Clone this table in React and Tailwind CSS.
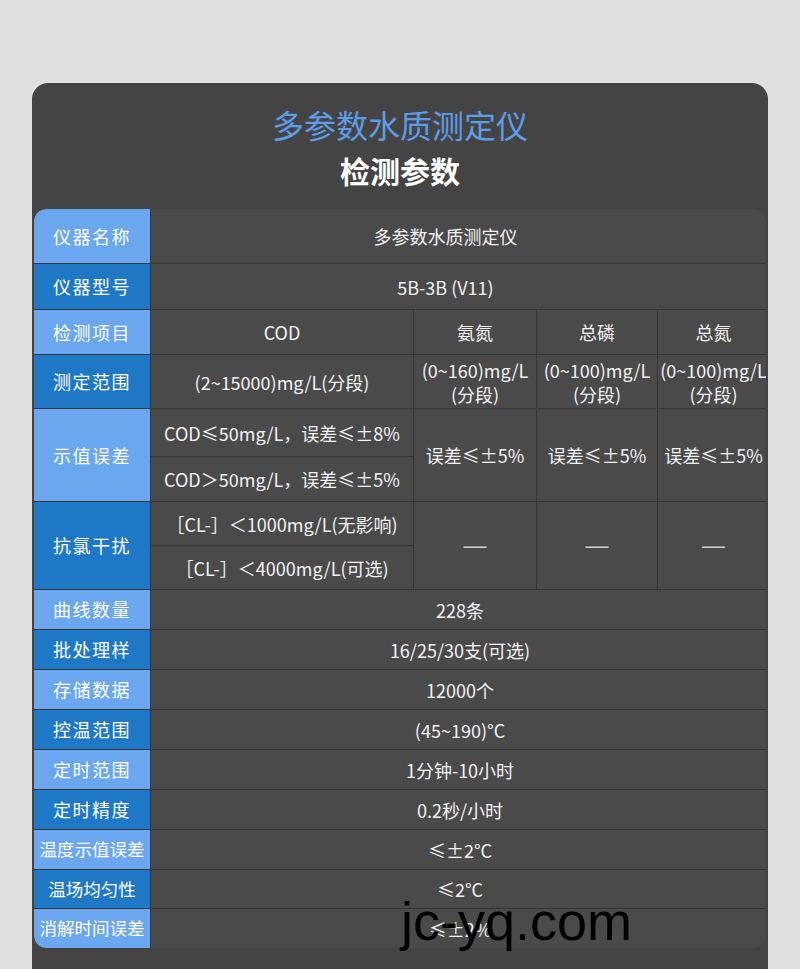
import React from 'react';

const light = 'bg-[#6aa7ef]';
const dark = 'bg-[#1f78c6]';

const simpleRows = [
  { label: '曲线数量', value: '228条', h: 'h-[39px]', tone: light },
  { label: '批处理样', value: '16/25/30支(可选)', h: 'h-[39px]', tone: dark },
  { label: '存储数据', value: '12000个', h: 'h-[39px]', tone: light },
  { label: '控温范围', value: '(45~190)°C', h: 'h-[39px]', tone: dark },
  { label: '定时范围', value: '1分钟-10小时', h: 'h-[39px]', tone: light },
  { label: '定时精度', value: '0.2秒/小时', h: 'h-[39px]', tone: dark },
  { label: '温度示值误差', value: '≤±2°C', h: 'h-[39px]', tone: light, tight: true },
  { label: '温场均匀性', value: '≤2°C', h: 'h-[38px]', tone: dark, tight: true },
  { label: '消解时间误差', value: '≤±2%', h: 'h-[39px]', tone: light, tight: true, last: true },
];

function Label({ children, tone, className = '', tight }) {
  return (
    <div
      className={`${tone} flex items-center justify-center text-white ${
        tight ? 'text-[17.5px] tracking-normal' : 'text-[18px] tracking-[1.5px]'
      } ${className}`}
    >
      {children}
    </div>
  );
}

function Cell({ children, className = '' }) {
  return (
    <div className={`bg-[#4a4a4a] flex flex-col items-center justify-center text-center text-[#f2f2f2] text-[18px] leading-[24px] ${className}`}>
      {children}
    </div>
  );
}

function Dash() {
  return (
    <Cell className="row-span-2">
      <span
        className="text-[23px] leading-none text-[#cfcfcf]"
        style={{ fontFamily: '"Liberation Sans", Arial, sans-serif' }}
      >
        —
      </span>
    </Cell>
  );
}

export default function App() {
  return (
    <div
      className="relative min-h-[969px] bg-[#e0e0e0] pt-[83px] px-[32px] overflow-hidden"
      style={{ fontFamily: '"Noto Sans CJK SC", "Noto Sans", sans-serif' }}
    >
      <div className="bg-[#444444] rounded-t-[16px] px-[2px] pb-[60px]">
        {/* HEADER */}
        <div className="flex flex-col items-center pt-[19px] pb-[17px]">
          <h1 className="text-[32px] leading-[44px] text-[#5d9de8]">多参数水质测定仪</h1>
          <h2 className="text-[30px] leading-[44px] font-bold text-white mt-[2px]">检测参数</h2>
        </div>

        {/* TABLE */}
        <div className="grid grid-cols-[116px_262px_122px_120px_111px] gap-px bg-[#363636] rounded-[12px] overflow-hidden w-[732px]">
          <Label tone={light} className="h-[54px] rounded-tl-[12px]">仪器名称</Label>
          <Cell className="col-span-4 pr-[29px]">多参数水质测定仪</Cell>

          <Label tone={dark} className="h-[45px]">仪器型号</Label>
          <Cell className="col-span-4 pr-[29px]">5B-3B (V11)</Cell>

          <Label tone={light} className="h-[44px]">检测项目</Label>
          <Cell>COD</Cell>
          <Cell>氨氮</Cell>
          <Cell>总磷</Cell>
          <Cell>总氮</Cell>

          <Label tone={dark} className="h-[53px]">测定范围</Label>
          <Cell>(2~15000)mg/L(分段)</Cell>
          <Cell><span>(0~160)mg/L</span><span>(分段)</span></Cell>
          <Cell><span>(0~100)mg/L</span><span>(分段)</span></Cell>
          <Cell><span>(0~100)mg/L</span><span>(分段)</span></Cell>

          <Label tone={light} className="row-span-2">示值误差</Label>
          <Cell className="h-[47px]">COD≤50mg/L，误差≤±8%</Cell>
          <Cell className="row-span-2">误差≤±5%</Cell>
          <Cell className="row-span-2">误差≤±5%</Cell>
          <Cell className="row-span-2">误差≤±5%</Cell>
          <Cell className="h-[44px]">COD＞50mg/L，误差≤±5%</Cell>

          <Label tone={dark} className="row-span-2">抗氯干扰</Label>
          <Cell className="h-[43px]">［CL-］＜1000mg/L(无影响)</Cell>
          <Dash />
          <Dash />
          <Dash />
          <Cell className="h-[43px]">［CL-］＜4000mg/L(可选)</Cell>

          {simpleRows.map((row) => (
            <React.Fragment key={row.label}>
              <Label
                tone={row.tone}
                tight={row.tight}
                className={`${row.h} ${row.last ? 'rounded-bl-[12px]' : ''}`}
              >
                {row.label}
              </Label>
              <Cell className="col-span-4">{row.value}</Cell>
            </React.Fragment>
          ))}
        </div>
      </div>

      {/* WATERMARK */}
      <div
        className="absolute left-[401px] top-[894px] text-[54px] leading-none text-black"
        style={{ fontFamily: '"Liberation Sans", Arial, sans-serif' }}
      >
        jc-yq.com
      </div>
    </div>
  );
}
